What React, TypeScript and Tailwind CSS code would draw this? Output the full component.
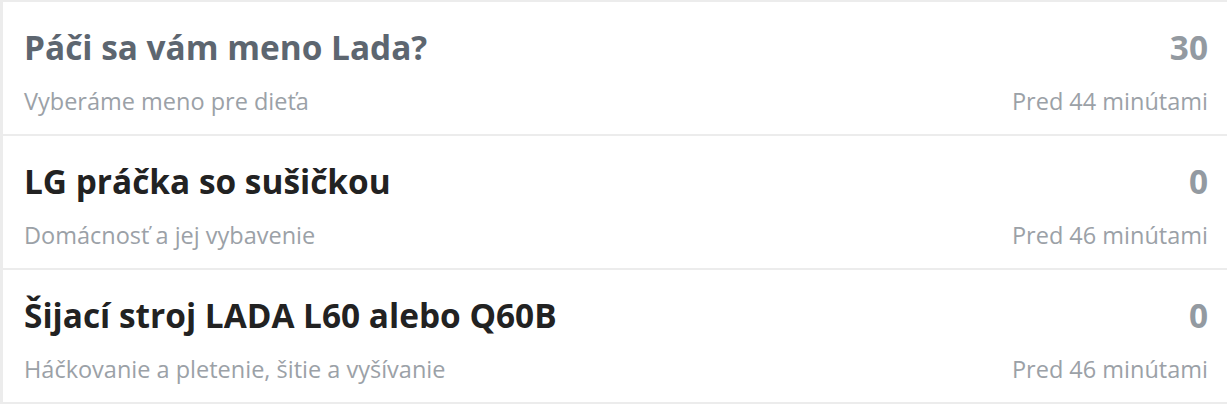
const topics = [
  { title: 'Páči sa vám meno Lada?', forum: 'Vyberáme meno pre dieťa', count: 30, time: 'Pred 44 minútami', visited: true },
  { title: 'LG práčka so sušičkou', forum: 'Domácnosť a jej vybavenie', count: 0, time: 'Pred 46 minútami', visited: false },
  { title: 'Šijací stroj LADA L60 alebo Q60B', forum: 'Háčkovanie a pletenie, šitie a vyšívanie', count: 0, time: 'Pred 46 minútami', visited: false },
]

export default function App() {
  return (
    <div className="w-[1227px] h-[405px] bg-white font-['Open_Sans',sans-serif] overflow-hidden">
      <div className="border-l-[3px] border-t-2 border-[#ececec]">
        {topics.map((t) => (
          <div key={t.title} className="border-b-2 border-[#ececec] pl-[21px] pr-[19px] pt-[26px] pb-[19px] h-[134px]">
            <div className="flex items-center justify-between h-[38px]">
              <span className={`text-[33.4px] font-bold leading-[38px] ${t.visited ? 'text-[#5d6670]' : 'text-[#222222]'}`}>
                {t.title}
              </span>
              <span className="text-[33.4px] font-bold leading-[38px] text-[#939aa1]">{t.count}</span>
            </div>
            <div className="flex items-center justify-between h-[28px] mt-[21px] text-[23.5px] leading-[28px] text-[#9ba1a7]">
              <span>{t.forum}</span>
              <span>{t.time}</span>
            </div>
          </div>
        ))}
      </div>
    </div>
  )
}
